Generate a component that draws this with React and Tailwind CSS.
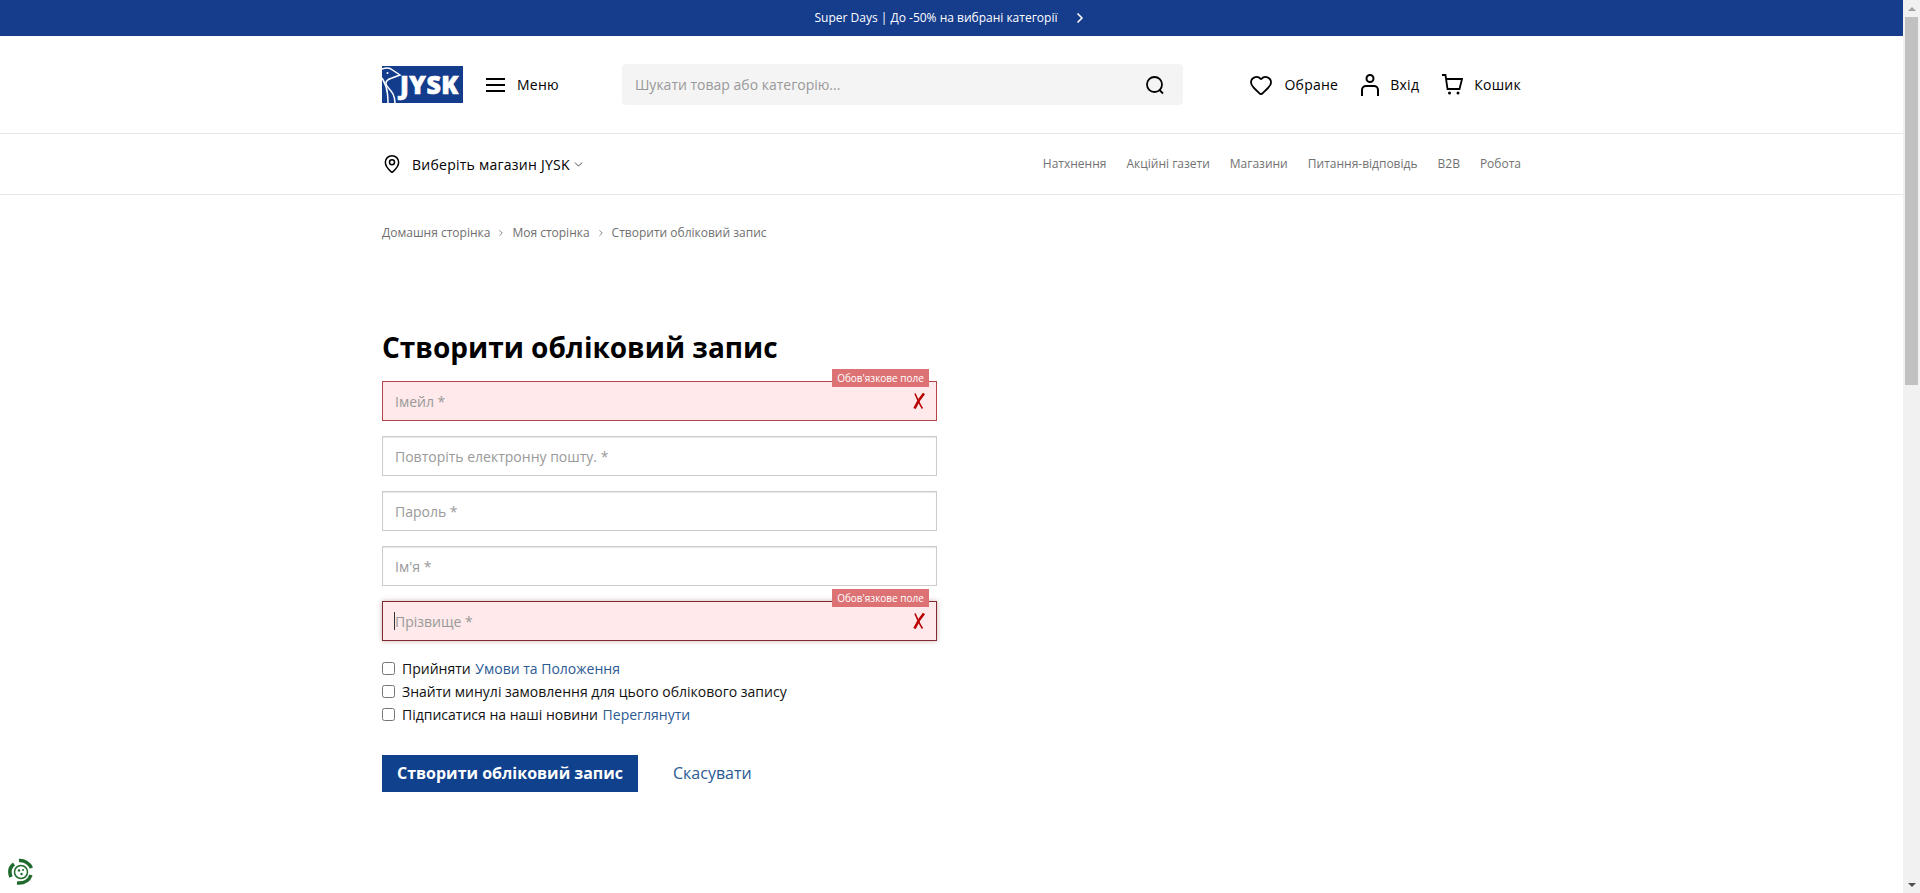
import { ChevronDown, ChevronRight, Heart, MapPin } from "lucide-react";

const navLinks = ["Натхнення", "Акційні газети", "Магазини", "Питання-відповідь", "B2B", "Робота"];

function Logo() {
  return (
    <div className="relative w-[81px] h-[37px] bg-[#143c8c] overflow-hidden">
      <svg className="absolute left-0 top-0" width="24" height="37" viewBox="0 0 24 37" fill="none" stroke="#fff" strokeWidth="1.5">
        <path d="M0 3C4 1.5 8 1.5 10.5 4L18 9L10 12C6.5 13 3.5 15 4 18C4.5 21 9 24 11 28C12.5 31 13 34 13 37" />
        <path d="M0 12C3 17 5 22 5.5 28C5.8 31 6 34 6 37" />
        <circle cx="5.5" cy="7" r="1" fill="#fff" stroke="none" />
      </svg>
      <span className="absolute left-[18px] top-0 text-[25px] leading-[37px] font-extrabold text-white tracking-[0.5px] [-webkit-text-stroke:0.6px_white]">JYSK</span>
    </div>
  );
}

function HeaderLink({ icon, label }) {
  return (
    <a className="flex items-center gap-[11px] text-[14px] font-medium tracking-[0.25px] text-black">
      {icon}
      <span>{label}</span>
    </a>
  );
}

function Field({ placeholder, error, focused }) {
  return (
    <div className="relative">
      <input
        placeholder={placeholder}
        className={
          "block w-full h-[40px] px-3 text-[14px] outline-none placeholder:text-[#999999] border " +
          (error
            ? "bg-[#ffe9ea] " + (focused ? "border-[#7f2a2e] shadow-[0_0_5px_rgba(120,40,40,0.35)]" : "border-[#b8434a]")
            : "bg-white border-[#cccccc] shadow-[inset_0_1px_1px_rgba(0,0,0,0.1)]")
        }
      />
      {focused && <span className="absolute left-[12px] top-[11px] w-px h-[18px] bg-[#333333]" />}
      {error && (
        <>
          <span className="absolute right-[8px] top-[-12px] h-[18px] w-[97px] flex items-center justify-center bg-[#dd7275] text-white text-[10px]">Обов'язкове поле</span>
          <svg className="absolute right-[12px] top-[12px]" width="12" height="16" viewBox="0 0 12 16" fill="none" stroke="#b80000">
            <path d="M2 0.5C4 5 6 10.5 9.5 15.5" strokeWidth="1.6" />
            <path d="M11 0.5C7.5 4.5 4 10 1.5 15.5" strokeWidth="2.6" />
          </svg>
        </>
      )}
    </div>
  );
}

function CheckRow({ children, className }) {
  return (
    <label className={"flex items-center gap-[7px] text-[14px] text-[#111111] " + className}>
      <input type="checkbox" className="w-[13px] h-[13px] m-0" />
      <span>{children}</span>
    </label>
  );
}

export default function App() {
  return (
    <div className="relative flex h-[893px] overflow-hidden bg-white font-['Open_Sans',sans-serif]">
      <div className="flex-1 min-w-0">
        <div className="h-[36px] bg-[#163c8c] flex items-center justify-center gap-[15px] text-white text-[12px] font-medium">
          <span>Super Days | До -50% на вибрані категорії</span>
          <ChevronRight size={16} strokeWidth={2.5} />
        </div>

        <header className="h-[98px] border-b border-[#e8e8e8]">
          <div className="w-[1139px] ml-[382px] h-full flex items-center">
            <Logo />
            <button className="flex items-center ml-[23px] gap-[12px] text-[14px] font-medium tracking-[0.25px] text-black">
              <svg width="19" height="16" viewBox="0 0 19 16" stroke="#000" strokeWidth="2">
                <path d="M0 2H19M0 8H19M0 14H19" />
              </svg>
              Меню
            </button>
            <div className="ml-[63px] w-[561px] h-[41px] rounded-[4px] bg-[#f4f4f4] flex items-center pl-[13px] pr-[18px]">
              <input placeholder="Шукати товар або категорію..." className="flex-1 bg-transparent outline-none text-[14px] placeholder:text-[#999999]" />
              <svg width="20" height="20" viewBox="0 0 20 20" fill="none" stroke="#000" strokeWidth="1.8">
                <circle cx="9.5" cy="9.5" r="7.5" />
                <path d="M14.5 15L18 18.5" />
              </svg>
            </div>
            <div className="ml-auto flex items-center gap-[23px]">
              <HeaderLink icon={<Heart size={24} strokeWidth={1.8} />} label="Обране" />
              <HeaderLink
                icon={
                  <svg width="18" height="24" viewBox="0 0 18 24" fill="none" stroke="#000" strokeWidth="2">
                    <circle cx="9" cy="5.5" r="3.5" />
                    <path d="M1 23V17C1 14.5 3 13 5 13H13C15 13 17 14.5 17 17V23" />
                  </svg>
                }
                label="Вхід"
              />
              <HeaderLink
                icon={
                  <svg width="21" height="24" viewBox="0 0 21 24" fill="none" stroke="#000" strokeWidth="1.8">
                    <path d="M0 2H3.5L5.5 16H17.5L20 6H4.5" />
                    <circle cx="7.5" cy="20" r="1.5" fill="#000" stroke="none" />
                    <circle cx="16" cy="20" r="1.5" fill="#000" stroke="none" />
                  </svg>
                }
                label="Кошик"
              />
            </div>
          </div>
        </header>

        <div className="h-[61px] border-b border-[#e8e8e8]">
          <div className="w-[1139px] ml-[382px] h-full flex items-center">
            <MapPin size={20} strokeWidth={1.8} className="text-black" />
            <span className="ml-[10px] text-[14px] font-medium tracking-[0.25px] text-black">Виберіть магазин JYSK</span>
            <ChevronDown size={13} strokeWidth={1.5} className="ml-[2px] text-[#222222]" />
            <nav className="ml-auto flex gap-[20px] text-[12px] text-[#727272]">
              {navLinks.map((link) => (
                <a key={link}>{link}</a>
              ))}
            </nav>
          </div>
        </div>

        <main className="w-[1140px] ml-[382px]">
          <div className="mt-[29px] flex items-center h-[18px] text-[12px] text-[#6f6f6f]">
            <a>Домашня сторінка</a>
            <ChevronRight size={10} className="mx-[6px]" />
            <a>Моя сторінка</a>
            <ChevronRight size={10} className="mx-[6px]" />
            <span>Створити обліковий запис</span>
          </div>

          <h1 className="mt-[85px] text-[28px] leading-[40px] font-bold text-black">Створити обліковий запис</h1>

          <form className="mt-[14px] w-[555px]">
            <div className="flex flex-col gap-[15px]">
              <Field placeholder="Імейл *" error />
              <Field placeholder="Повторіть електронну пошту. *" />
              <Field placeholder="Пароль *" />
              <Field placeholder="Ім'я *" />
              <Field placeholder="Прізвище *" error focused />
            </div>

            <div className="mt-[17px] flex flex-col">
              <CheckRow className="h-[20px]">
                Прийняти <a className="ml-[1px] text-[#2b5a94]">Умови та Положення</a>
              </CheckRow>
              <CheckRow className="h-[20px] mt-[3px]">Знайти минулі замовлення для цього облікового запису</CheckRow>
              <CheckRow className="h-[20px] mt-[3px]">
                Підписатися на наші новини <a className="ml-[1px] text-[#2b5a94]">Переглянути</a>
              </CheckRow>
            </div>

            <div className="mt-[31px] flex items-center">
              <button type="button" className="w-[256px] h-[37px] pb-[2px] bg-[#10418c] text-white text-[16px] font-bold">Створити обліковий запис</button>
              <a className="ml-[35px] mb-[2px] text-[16px] text-[#2b5a94]">Скасувати</a>
            </div>
          </form>
        </main>
      </div>

      <aside className="w-[17px] shrink-0 bg-[#f1f1f1] flex flex-col items-center">
        <div className="h-[17px] flex items-center justify-center">
          <div className="w-0 h-0 border-x-[4px] border-x-transparent border-b-[4px] border-b-[#a3a3a3]" />
        </div>
        <div className="w-[13px] h-[368px] bg-[#c1c1c1]" />
        <div className="mt-auto h-[17px] flex items-center justify-center">
          <div className="w-0 h-0 border-x-[4px] border-x-transparent border-t-[4px] border-t-[#505050]" />
        </div>
      </aside>

      <svg className="absolute left-[7px] top-[858px]" width="28" height="28" viewBox="0 0 28 28" fill="none">
        <g stroke="#1f6b2e" strokeWidth="3.5" strokeLinecap="butt">
          <path d="M4 19C2 14 3 9 7 6" />
          <path d="M12 2.5C17 2 22 5 24.5 10" />
          <path d="M24 17C22 22.5 17 25.5 10 25" />
        </g>
        <circle cx="14" cy="14" r="6.5" stroke="#1f6b2e" strokeWidth="1.5" />
        <circle cx="12" cy="12.5" r="1.2" fill="#1f6b2e" />
        <circle cx="16" cy="12" r="1" fill="#1f6b2e" />
        <circle cx="14.5" cy="16" r="1.2" fill="#1f6b2e" />
      </svg>
    </div>
  );
}
